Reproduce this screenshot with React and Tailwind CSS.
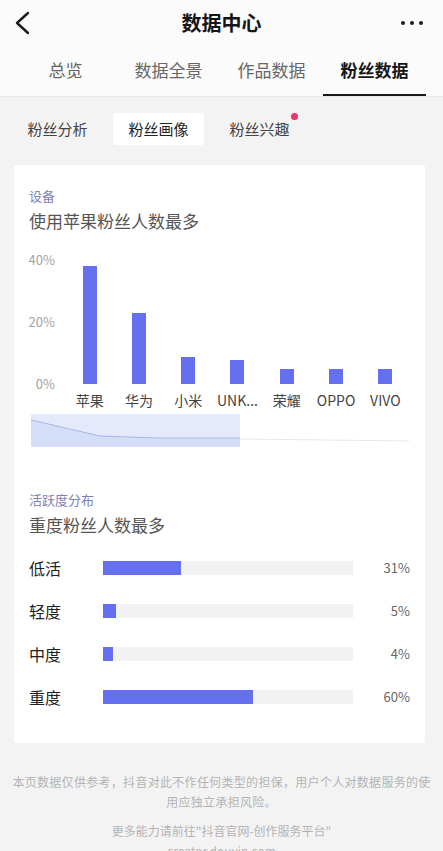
import React from 'react'

const devices = [
  { name: '苹果', value: 38 },
  { name: '华为', value: 23 },
  { name: '小米', value: 8.7 },
  { name: 'UNK...', value: 7.7 },
  { name: '荣耀', value: 4.8 },
  { name: 'OPPO', value: 4.8 },
  { name: 'VIVO', value: 4.8 },
]

const activity = [
  { name: '低活', value: 31 },
  { name: '轻度', value: 5 },
  { name: '中度', value: 4 },
  { name: '重度', value: 60 },
]

const tabs = ['总览', '数据全景', '作品数据', '粉丝数据']

function App() {
  return (
    <div
      className="min-h-screen w-[443px] bg-[#f3f3f3] overflow-hidden"
      style={{ fontFamily: '"Noto Sans CJK SC", "Noto Sans", sans-serif' }}
    >
      {/* Header */}
      <div className="bg-[#fbfbfb]">
        <div className="h-[46px] flex items-center px-[14px]">
          <div className="w-[60px]">
            <svg width="16" height="24" viewBox="0 0 16 24" fill="none">
              <path d="M14 2 L3 12 L14 22" stroke="#1a1a1a" strokeWidth="2.4" strokeLinecap="round" strokeLinejoin="round" />
            </svg>
          </div>
          <div className="flex-1 text-center text-[20px] font-bold text-[#161616] leading-none">数据中心</div>
          <div className="w-[60px] flex items-center justify-end gap-[5px] pr-[6px]">
            <span className="w-[4px] h-[4px] rounded-full bg-[#1a1a1a]" />
            <span className="w-[4px] h-[4px] rounded-full bg-[#1a1a1a]" />
            <span className="w-[4px] h-[4px] rounded-full bg-[#1a1a1a]" />
          </div>
        </div>

        {/* Main tabs */}
        <div className="h-[51px] px-[14px] flex border-b border-[#e6e6e6]">
          {tabs.map((t, i) => (
            <div key={t} className="w-[103px] flex flex-col items-center">
              <div
                className={`flex-1 flex items-center text-[17px] ${
                  i === 3 ? 'font-bold text-[#161616]' : 'text-[#666]'
                }`}
              >
                {t}
              </div>
              <div className={`h-[2px] w-full ${i === 3 ? 'bg-[#1a1a1a]' : ''}`} />
            </div>
          ))}
        </div>
      </div>

      {/* Sub tabs */}
      <div className="flex gap-[10px] px-[12px] pt-[16px]">
        <div className="w-[91px] h-[32px] flex items-center justify-center text-[15px] text-[#444]">粉丝分析</div>
        <div className="w-[91px] h-[32px] flex items-center justify-center text-[15px] text-[#222] bg-white rounded-[3px]">粉丝画像</div>
        <div className="w-[91px] h-[32px] flex items-center justify-center text-[15px] text-[#444]">
          <span className="relative">
            粉丝兴趣
            <span className="absolute -right-[8px] -top-[5px] w-[7px] h-[7px] rounded-full bg-[#e8336b]" />
          </span>
        </div>
      </div>

      {/* Card */}
      <div className="ml-[14px] w-[411px] mt-[20px] bg-white rounded-[2px] px-[15px] pt-[22px] pb-[34px]">
        <div className="text-[13px] leading-[18px] text-[#7d81b8]">设备</div>
        <div className="mt-[4px] text-[17px] leading-[24px] text-[#555]">使用苹果粉丝人数最多</div>

        <div className="mt-[19px] flex">
          <div className="w-[36px] h-[140px] flex flex-col justify-between items-end pr-[10px] text-[13px] leading-[16px] text-[#a3a3a3]">
            <span>40%</span>
            <span>20%</span>
            <span>0%</span>
          </div>
          <div className="flex-1 pt-[8px]">
            <div className="h-[124px] flex items-end">
              {devices.map((d) => (
                <div key={d.name} className="flex-1 flex justify-center">
                  <div className="w-[14px] bg-[#6470f0]" style={{ height: `${(d.value / 40) * 124}px` }} />
                </div>
              ))}
            </div>
            <div className="mt-[6px] h-[20px] flex">
              {devices.map((d) => (
                <div key={d.name} className="flex-1 text-center text-[14px] leading-[20px] text-[#444] whitespace-nowrap">
                  {d.name}
                </div>
              ))}
            </div>
          </div>
        </div>

        {/* Zoom slider */}
        <div className="mt-[4px] ml-[2px]">
          <svg width="378" height="33" viewBox="0 0 378 33">
            <path d="M0 6 L69 22 L126 24 L378 27" fill="none" stroke="#e6e6e6" strokeWidth="1" />
            <rect x="0" y="0" width="209" height="33" fill="#e4e9fb" />
            <path d="M0 6 L69 22 L126 24 L209 24 L209 33 L0 33 Z" fill="#d5def9" />
            <path d="M0 6 L69 22 L126 24 L209 24" fill="none" stroke="#a9b6e6" strokeWidth="1" />
          </svg>
        </div>

        <div className="mt-[44px] text-[13px] leading-[18px] text-[#7d81b8]">活跃度分布</div>
        <div className="mt-[4px] text-[17px] leading-[24px] text-[#555]">重度粉丝人数最多</div>

        <div className="mt-[19px] flex flex-col gap-[19px]">
          {activity.map((a) => (
            <div key={a.name} className="h-[24px] flex items-center">
              <div className="w-[74px] text-[16px] text-[#222]">{a.name}</div>
              <div className="w-[250px] h-[14px] bg-[#f2f2f2]">
                <div className="h-full bg-[#6470f0]" style={{ width: `${a.value}%` }} />
              </div>
              <div className="flex-1 text-right text-[13px] text-[#666]">{a.value}%</div>
            </div>
          ))}
        </div>
      </div>

      {/* Footer */}
      <div className="mt-[29px] px-[10px] text-center text-[12px] leading-[20px] tracking-[0.3px] text-[#b3b3b3]">
        本页数据仅供参考，抖音对此不作任何类型的担保，用户个人对数据服务的使
        <br />
        用应独立承担风险。
      </div>
      <div className="mt-[9px] text-center text-[12px] leading-[20px] text-[#b3b3b3]">
        更多能力请前往"抖音官网-创作服务平台"
      </div>
      <div className="text-center text-[12px] leading-[20px] text-[#b3b3b3]">creator.douyin.com</div>
    </div>
  )
}

export default App
